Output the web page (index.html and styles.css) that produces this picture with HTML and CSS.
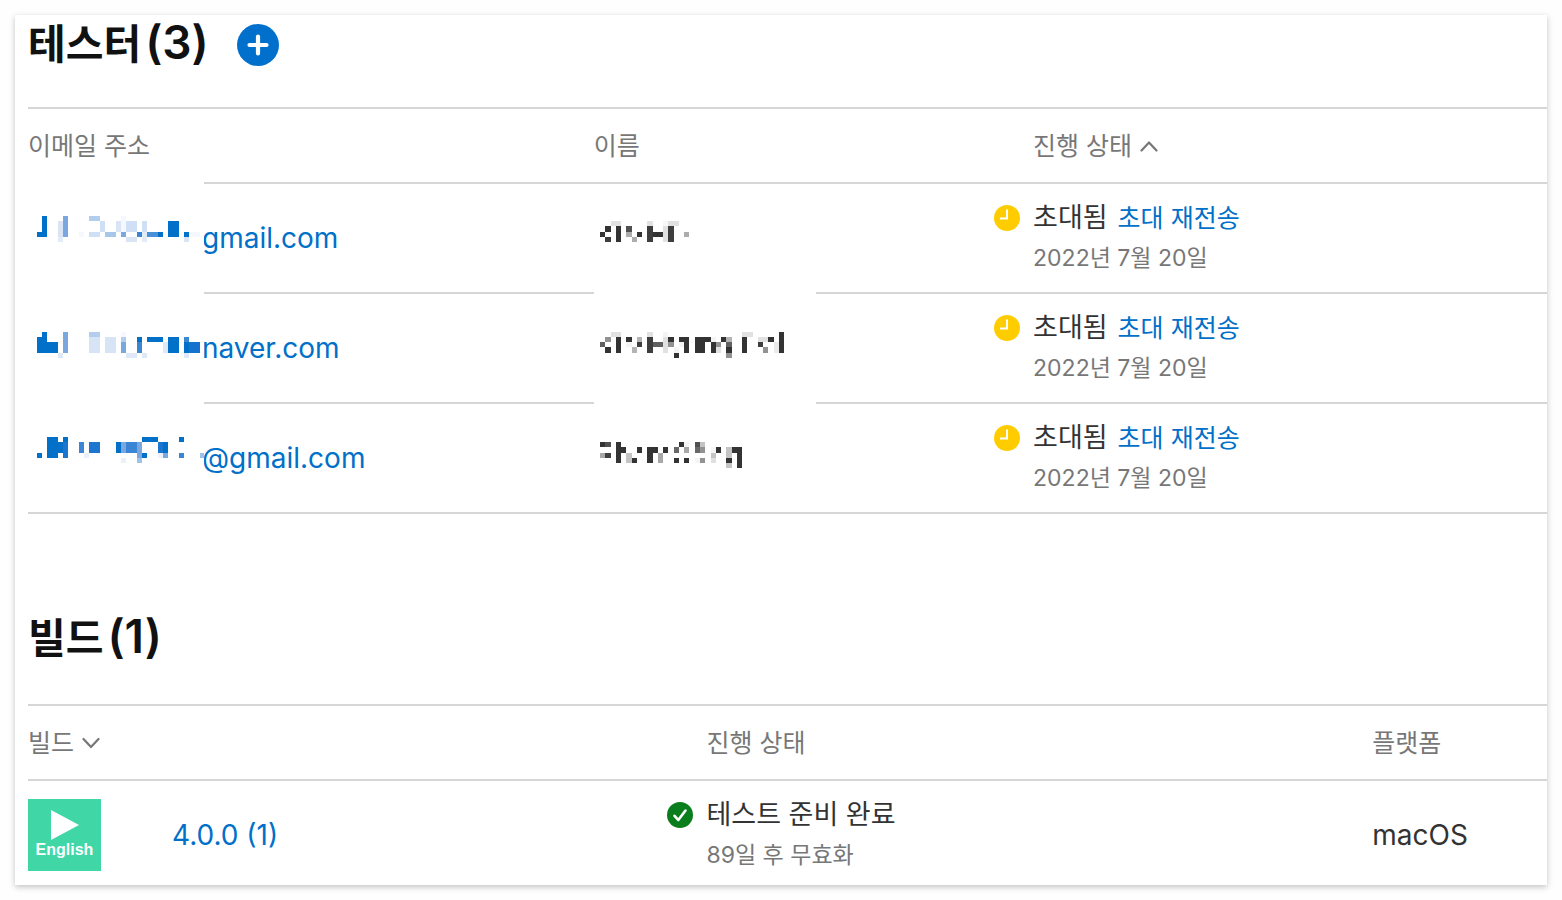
FILE: index.html
```html
<!DOCTYPE html>
<html lang="ko">
<head>
<meta charset="utf-8">
<meta name="viewport" content="width=device-width, initial-scale=1">
<title>테스터</title>
<link rel="stylesheet" href="styles.css">
</head>
<body>
<main class="card">
  <section class="testers">
    <header class="section-head">
      <h2 class="title">테스터<span class="count">(3)</span></h2>
      <button class="add" type="button" aria-label="테스터 추가">
        <svg viewBox="0 0 42 42" width="42" height="42" aria-hidden="true"><circle cx="21" cy="21" r="21" fill="#0070cc"/><path d="M21 12.500V29.500M12.500 21H29.500" stroke="#fff" stroke-width="4.200" stroke-linecap="round"/></svg>
      </button>
    </header>
    <div class="table-wrap">
      <table class="table">
        <colgroup><col class="col-email"><col class="col-name"><col></colgroup>
        <thead>
          <tr>
            <th scope="col">이메일 주소</th>
            <th scope="col">이름</th>
            <th scope="col" class="status-head"><button class="sort" type="button">진행 상태<svg viewBox="0 0 18 12" width="18" height="12" aria-hidden="true"><path d="M1.500 10.500L9 2.500L16.500 10.500" fill="none" stroke="#777" stroke-width="2.200" stroke-linecap="round" stroke-linejoin="round"/></svg></button></th>
          </tr>
        </thead>
        <tbody>
          <tr>
            <td><a class="email" href="#">gmail.com</a></td>
            <td></td>
            <td><div class="status"><svg class="badge" viewBox="0 0 26 26" width="26" height="26" aria-hidden="true"><circle cx="13" cy="13" r="13" fill="#ffcc00"/><path d="M13 4.500V13.500H6" fill="none" stroke="#fff" stroke-width="2"/></svg><div><p class="state">초대됨<a class="resend" href="#">초대 재전송</a></p><p class="note">2022년 7월 20일</p></div></div></td>
          </tr>
          <tr>
            <td><a class="email" href="#">naver.com</a></td>
            <td></td>
            <td><div class="status"><svg class="badge" viewBox="0 0 26 26" width="26" height="26" aria-hidden="true"><circle cx="13" cy="13" r="13" fill="#ffcc00"/><path d="M13 4.500V13.500H6" fill="none" stroke="#fff" stroke-width="2"/></svg><div><p class="state">초대됨<a class="resend" href="#">초대 재전송</a></p><p class="note">2022년 7월 20일</p></div></div></td>
          </tr>
          <tr>
            <td><a class="email" href="#">@gmail.com</a></td>
            <td></td>
            <td><div class="status"><svg class="badge" viewBox="0 0 26 26" width="26" height="26" aria-hidden="true"><circle cx="13" cy="13" r="13" fill="#ffcc00"/><path d="M13 4.500V13.500H6" fill="none" stroke="#fff" stroke-width="2"/></svg><div><p class="state">초대됨<a class="resend" href="#">초대 재전송</a></p><p class="note">2022년 7월 20일</p></div></div></td>
          </tr>
        </tbody>
      </table>
      <svg class="mask mask-email" viewBox="28 181 176 330" width="176" height="330" shape-rendering="crispEdges" aria-hidden="true">
        <rect x="28" y="181" width="176" height="330" fill="#fff"/>
        <g transform="translate(20 175)">
          <path fill="#0070c9" d="M22 41h5v21h-10v-5h5zM138 57h5v5h-5zM148 46h11v16h-11zM164 57h5v5h-5z"/>
          <path fill="#79a7e0" d="M43 41h5v21h-5zM101 57h5v5h-5z"/>
          <path fill="#d9e5f5" d="M38 46h5v16h-5zM96 46h5v11h-5zM106 62h11v5h-11zM164 62h5v5h-5z"/>
          <path fill="#e3ebf8" d="M38 62h5v5h-5zM122 57h5v10h-5z"/>
          <path fill="#b3cdee" d="M69 41h11v5h-11z"/>
          <path fill="#cfdff5" d="M80 46h5v11h-5zM69 57h11v5h-11zM106 46h11v11h-11zM122 46h5v11h-5z"/>
          <path fill="#a5c8e8" d="M85 57h11v5h-11z"/>
          <path fill="#f5f9ff" d="M101 41h5v16h-5zM59 57h5v5h-5zM169 57h11v5h-11z"/>
          <path fill="#3a85d4" d="M117 57h5v5h-5z"/>
          <path fill="#4a90d8" d="M127 57h11v5h-11z"/>
        </g>
        <g transform="translate(20 315)">
          <path fill="#0070c9" d="M22 17h5v10h11v11h-21v-16h5zM117 22h5v5h-5zM127 22h16v5h-16zM148 22h11v16h-11zM164 27h5v11h-5z"/>
          <path fill="#1473cc" d="M169 27h11v11h-11z"/>
          <path fill="#79a7e0" d="M43 17h5v21h-5zM101 27h5v11h-5z"/>
          <path fill="#b3cdee" d="M69 17h11v5h-11zM101 22h5v5h-5z"/>
          <path fill="#d6e4f5" d="M69 22h11v16h-11zM85 22h11v16h-11z"/>
          <path fill="#dee8f6" d="M38 38h5v5h-5zM106 38h11v5h-11zM122 38h5v5h-5zM143 27h5v11h-5zM164 38h5v5h-5z"/>
          <path fill="#f5f9ff" d="M101 17h5v5h-5z"/>
          <path fill="#3a85d4" d="M117 27h5v11h-5zM164 22h5v5h-5z"/>
          <path fill="#0070c9" d="M17 138h5v5h-5zM27 122h11v21h-11zM38 127h5v11h-5zM43 122h5v5h-5zM96 127h5v11h-5zM122 122h16v5h-16zM122 138h5v5h-5zM143 127h5v11h-5zM159 122h5v5h-5z"/>
          <path fill="#1a76ce" d="M43 127h5v16h-5zM69 127h11v11h-11zM138 127h5v11h-5z"/>
          <path fill="#3a85d4" d="M59 127h5v11h-5zM106 127h11v11h-11zM159 138h5v5h-5z"/>
          <path fill="#79a7e0" d="M101 127h5v11h-5zM117 127h5v16h-5zM143 138h5v5h-5z"/>
          <path fill="#9dc3ea" d="M117 143h5v5h-5zM180 138h4v5h-4z"/>
          <path fill="#ebf1fb" d="M64 138h5v5h-5zM101 143h5v5h-5zM138 138h5v5h-5z"/>
        </g>
      </svg>
      <svg class="mask mask-name" viewBox="594 200 222 300" width="222" height="300" shape-rendering="crispEdges" aria-hidden="true">
        <rect x="594" y="200" width="222" height="300" fill="#fff"/>
        <g transform="translate(580 200)">
          <path fill="#e1e1e1" d="M31 21h10v5h-10zM67 21h6v5h-6zM83 26h5v16h-5zM88 21h11v5h-11z"/>
          <path fill="#333" d="M25 26h6v6h-6zM20 32h5v5h-5zM36 26h5v16h-5zM57 32h5v5h-5zM73 32h10v5h-10z"/>
          <path fill="#3e3e3e" d="M25 37h6v5h-6zM67 26h6v16h-6zM88 26h6v16h-6z"/>
          <path fill="#505050" d="M46 26h6v6h-6z"/>
          <path fill="#acacac" d="M46 32h6v5h-6zM52 37h5v5h-5zM104 32h5v5h-5z"/>
          <path fill="#f8f8f8" d="M83 21h5v5h-5z"/>
          <path fill="#e1e1e1" d="M31 132h10v5h-10zM67 132h6v5h-6zM83 137h5v16h-5zM136 147h5v6h-5zM162 132h11v5h-11zM178 137h10v5h-10z"/>
          <path fill="#333" d="M25 147h6v6h-6zM36 137h5v16h-5zM46 137h6v5h-6zM88 137h6v5h-6zM94 153h5v5h-5zM99 137h10v16h-5v-11h-5zM115 137h16v5h-6v11h-10zM131 142h5v11h-5zM141 137h5v5h-5zM146 147h6v6h-6zM162 137h5v16h-5zM188 137h6v5h-6zM199 132h5v21h-5z"/>
          <path fill="#3e3e3e" d="M67 137h6v16h-6zM57 142h5v5h-5zM178 142h5v5h-5z"/>
          <path fill="#606060" d="M20 142h5v5h-5zM73 142h10v5h-10zM146 142h6v5h-6z"/>
          <path fill="#929292" d="M25 137h6v5h-6zM88 142h6v5h-6zM136 142h5v5h-5zM146 153h6v5h-6zM183 147h5v6h-5z"/>
          <path fill="#b4b4b4" d="M57 137h5v5h-5zM52 147h5v6h-5zM146 137h6v5h-6z"/>
          <path fill="#f4f4f4" d="M46 142h6v5h-6zM83 132h5v5h-5zM94 147h5v6h-5zM99 142h5v5h-5zM131 137h5v5h-5z"/>
          <path fill="#eaeaea" d="M194 142h5v11h-5z"/>
        </g>
        <g transform="translate(580 320)">
          <path fill="#333" d="M20 122h5v5h-5zM36 122h5v5h5v6h-5v10h-5zM52 138h5v5h-5zM57 127h5v6h-5zM67 127h11v6h-5v10h-6zM83 127h5v6h-5zM99 122h5v5h-5zM94 138h5v5h-5zM104 138h5v5h-5zM136 127h5v6h-5zM152 127h10v21h-5v-15h-5zM146 138h6v5h-6z"/>
          <path fill="#505050" d="M25 122h6v5h-6zM115 122h5v5h-5z"/>
          <path fill="#404040" d="M25 133h6v5h-6z"/>
          <path fill="#686868" d="M94 127h5v6h-5zM115 127h5v6h-5z"/>
          <path fill="#929292" d="M120 127h5v6h-5zM120 138h5v5h-5z"/>
          <path fill="#a8a8a8" d="M20 133h5v5h-5zM78 133h5v10h-5zM104 127h5v6h-5z"/>
          <path fill="#c4c4c4" d="M46 133h6v10h-6zM120 122h5v5h-5zM131 133h5v5h-5zM146 127h6v11h-6zM146 143h6v5h-6z"/>
          <path fill="#e0e0e0" d="M131 138h5v5h-5z"/>
          <path fill="#f5f5f5" d="M104 122h5v5h-5zM115 138h5v5h-5zM131 127h5v6h-5z"/>
        </g>
      </svg>
    </div>
  </section>

  <section class="builds">
    <header class="section-head">
      <h2 class="title">빌드<span class="count">(1)</span></h2>
    </header>
    <table class="table">
      <colgroup><col class="col-build"><col class="col-progress"><col></colgroup>
      <thead>
        <tr>
          <th scope="col"><button class="sort" type="button">빌드<svg viewBox="0 0 18 12" width="18" height="12" aria-hidden="true"><path d="M1.500 2L9 10L16.500 2" fill="none" stroke="#777" stroke-width="2.200" stroke-linecap="round" stroke-linejoin="round"/></svg></button></th>
          <th scope="col" class="status-head">진행 상태</th>
          <th scope="col">플랫폼</th>
        </tr>
      </thead>
      <tbody>
        <tr class="last">
          <td><div class="build"><span class="app-icon"><svg viewBox="0 0 28 30" width="28" height="30" aria-hidden="true"><path d="M0 0L28 15L0 30Z" fill="#fff"/></svg>English</span><a href="#">4.0.0 (1)</a></div></td>
          <td><div class="status"><svg class="badge" viewBox="0 0 26 26" width="26" height="26" aria-hidden="true"><circle cx="13" cy="13" r="13" fill="#0a7d1c"/><path d="M7.500 13.800L11.300 18L18.500 8.500" fill="none" stroke="#fff" stroke-width="2.600" stroke-linecap="round" stroke-linejoin="round"/></svg><div><p class="state">테스트 준비 완료</p><p class="note">89일 후 무효화</p></div></div></td>
          <td>macOS</td>
        </tr>
      </tbody>
    </table>
  </section>
</main>
</body>
</html>
```
FILE: styles.css
```css
* {
  box-sizing: border-box;
}

body {
  margin: 0;
  padding: 15px;
  background: #fefefe;
  color: #333;
  font-family: Inter, "Noto Sans CJK KR", sans-serif;
  font-size: 28px;
  line-height: 40px;
}

a {
  color: #0070c9;
  text-decoration: none;
}

button {
  padding: 0;
  border: 0;
  background: none;
  color: inherit;
  font: inherit;
  cursor: pointer;
}

p {
  margin: 0;
}

.card {
  padding-left: 13px;
  background: #fff;
  box-shadow: 0 2px 6px rgba(0, 0, 0, 0.24);
}

.section-head {
  display: flex;
  align-items: center;
  gap: 28px;
  height: 60px;
}

.title {
  margin: 0;
  padding-bottom: 4px;
  color: #111;
  font-size: 41px;
  font-weight: 700;
  line-height: 56px;
}

.count {
  margin-left: 4px;
  font-size: 46px;
  font-weight: 600;
}

.add {
  display: flex;
  border-radius: 50%;
}

.table-wrap {
  position: relative;
  margin-top: 32px;
}

.builds {
  padding-top: 95px;
}

.builds .table {
  margin-top: 35px;
}

.table {
  width: 100%;
  table-layout: fixed;
  border-collapse: separate;
  border-spacing: 0;
  border-top: 2px solid #d6d6d6;
}

.col-email {
  width: 37.25%;
}

.col-name {
  width: 26.35%;
}

.col-build {
  width: 42.1%;
}

.col-progress {
  width: 46.4%;
}

th,
td {
  padding: 0;
  border-bottom: 2px solid #d6d6d6;
  text-align: left;
}

th {
  height: 75px;
  color: #777;
  font-size: 25px;
  font-weight: 400;
}

td {
  height: 110px;
}

.last td {
  height: 104px;
  padding-top: 4px;
  border-bottom: 0;
}

.status-head {
  padding-left: 39px;
}

.sort {
  display: flex;
  align-items: center;
  gap: 8px;
}

.email {
  padding-left: 174px;
}

.status {
  display: flex;
  gap: 13px;
}

.badge {
  flex: none;
  margin-top: 7px;
}

.state {
  font-size: 27px;
}

.resend {
  margin-left: 10px;
  font-size: 25px;
}

.note {
  color: #777;
  font-size: 23px;
}

.mask {
  position: absolute;
}

.mask-email {
  top: 74px;
  left: 0;
}

.mask-name {
  top: 93px;
  left: 37.25%;
}

.build {
  display: flex;
  align-items: center;
  gap: 71px;
}

.app-icon {
  display: flex;
  flex-direction: column;
  align-items: center;
  width: 73px;
  height: 72px;
  padding-top: 11px;
  background: #40d6a5;
  color: #fff;
  font-family: "Liberation Sans", Arial, sans-serif;
  font-size: 16px;
  font-weight: 700;
  line-height: 20px;
}
```
